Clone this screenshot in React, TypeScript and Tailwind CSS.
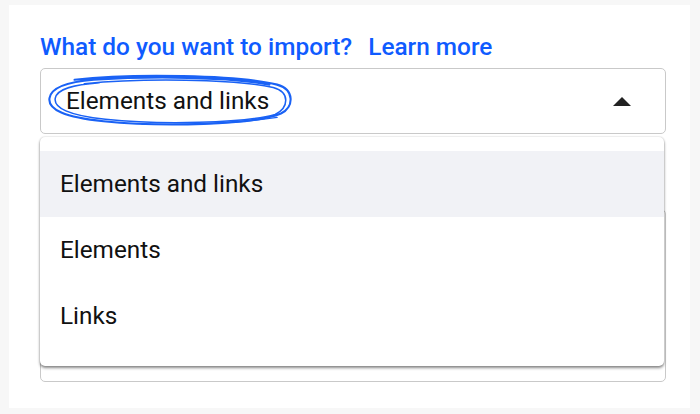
import React from "react";

const options = ["Elements and links", "Elements", "Links"];

const Scribble = () => (
  <svg
    className="absolute left-[-6px] top-[5px] pointer-events-none"
    width="272"
    height="54"
    viewBox="0 0 260 56"
    fill="none"
  >
    <path
      d="M30 6 C90 -1 200 1 240 11 C258 16 258 34 244 41 C215 53 120 55 60 49 C20 45 2 37 4 25 C6 13 24 8 50 6 C110 2 190 3 232 11"
      stroke="#1a62f5"
      strokeWidth="2.2"
      strokeLinecap="round"
    />
    <path
      d="M40 10 C100 4 196 5 236 14 C254 19 252 35 238 42 C205 51 120 53 62 47 C24 43 8 35 10 25 C12 15 30 11 56 9"
      stroke="#1a62f5"
      strokeWidth="1.6"
      strokeLinecap="round"
    />
    <path d="M100 52 C150 53 200 51 240 45" stroke="#1a62f5" strokeWidth="1.4" strokeLinecap="round" />
  </svg>
);

export default function App() {
  return (
    <div className="w-[700px] h-[414px] bg-[#f7f7f7] pt-[5px] pl-[9px] font-['Roboto',sans-serif]">
      <div className="relative w-[681px] h-[403px] bg-white pl-[31px] pt-[28px]">
        <h2 className="text-[24.4px] leading-[28px] font-medium text-[#0f5bff] flex gap-[16px]">
          <span>What do you want to import?</span>
          <span>Learn more</span>
        </h2>

        <div className="relative mt-[7px] w-[626px] h-[66px] border border-[#c9c9c9] rounded-[5px] flex items-center justify-between pl-[25px] pr-[34px]">
          <span className="text-[24.3px] leading-[28px] text-[#111]">Elements and links</span>
          <svg width="18" height="9" viewBox="0 0 18 9">
            <polygon points="9,0 18,9 0,9" fill="#222" />
          </svg>
          <Scribble />
        </div>

        <div className="mt-[75px] w-[626px] h-[173px] border border-[#c9c9c9] rounded-[5px]" />

        <div className="absolute left-[31px] top-[132px] w-[624px] bg-white rounded-[5px] pt-[14px] pb-[17px] shadow-[0_2px_3px_rgba(0,0,0,0.45),0_0_2px_rgba(0,0,0,0.2)]">
          {options.map((o, i) => (
            <div
              key={o}
              className={`h-[66px] flex items-center pl-[20px] text-[24.3px] leading-[28px] text-[#111] ${i === 0 ? "bg-[#f1f2f6]" : ""}`}
            >
              {o}
            </div>
          ))}
        </div>
      </div>
    </div>
  );
}
